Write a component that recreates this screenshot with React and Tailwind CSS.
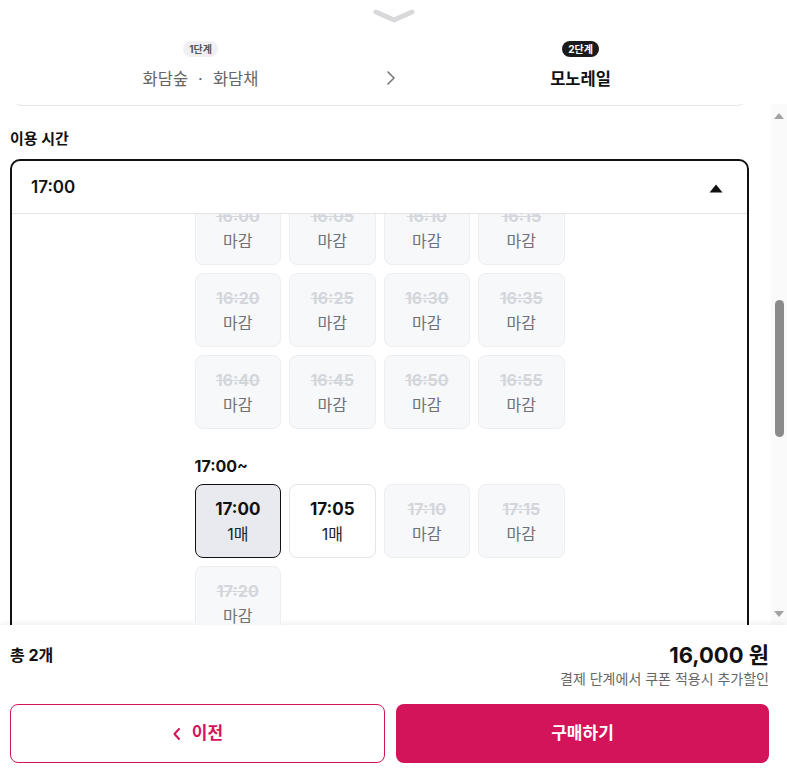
import React, { useLayoutEffect, useRef } from 'react'

const FONT = { fontFamily: 'Inter, "Noto Sans CJK KR", "Noto Sans", sans-serif' }

const rows16 = [
    ['16:00', '16:05', '16:10', '16:15'],
    ['16:20', '16:25', '16:30', '16:35'],
    ['16:40', '16:45', '16:50', '16:55'],
]

const slots17 = [
    { time: '17:00', label: '1매', state: 'selected' },
    { time: '17:05', label: '1매', state: 'open' },
    { time: '17:10', label: '마감', state: 'closed' },
    { time: '17:15', label: '마감', state: 'closed' },
    { time: '17:20', label: '마감', state: 'closed' },
]

const Slot = ({ time, label, state }) => {
    if (state === 'closed') {
        return (
            <div className="flex h-[74px] flex-col items-center justify-center rounded-lg border border-[#eceef2] bg-[#f7f8fa]">
                <span className="text-[16px] font-bold leading-5 text-[#d3d6db] line-through">{time}</span>
                <span className="mt-[5px] text-[16px] leading-5 text-[#6f7177]">{label}</span>
            </div>
        )
    }
    const selected = state === 'selected'
    return (
        <div className={`flex h-[74px] flex-col items-center justify-center rounded-lg border ${selected ? 'border-[#111] bg-[#e9eaef]' : 'border-[#e4e5e8] bg-white'}`}>
            <span className="text-[17px] font-bold leading-5 text-[#111]">{time}</span>
            <span className="mt-[5px] text-[16px] leading-5 text-[#222]">{label}</span>
        </div>
    )
}

// classic scrollbar look beside the scroll area
const FakeScrollbar = () => (
    <div className="flex w-[16px] shrink-0 flex-col items-center bg-[#fafafa]">
        <svg className="mt-[9px]" width="10" height="6" viewBox="0 0 10 6">
            <path d="M5 0 L10 6 L0 6 Z" fill="#a3a3a3" />
        </svg>
        <div className="mt-[181px] h-[137px] w-[9px] rounded-full bg-[#8b8b8b]" />
        <div className="flex-1" />
        <svg className="mb-[8px]" width="10" height="6" viewBox="0 0 10 6">
            <path d="M0 0 L10 0 L5 6 Z" fill="#a3a3a3" />
        </svg>
    </div>
)

export default function App() {
    const outerRef = useRef(null)
    const cardRef = useRef(null)
    const listRef = useRef(null)
    const firstRowRef = useRef(null)

    useLayoutEffect(() => {
        const card = cardRef.current
        outerRef.current.scrollTop = card.offsetTop + card.offsetHeight - 2
        listRef.current.scrollTop = firstRowRef.current.offsetTop + 23
    }, [])

    return (
        <div className="flex h-[776px] w-[787px] flex-col overflow-hidden bg-white text-[#111]" style={FONT}>

            {/* Header / steps */}
            <div className="h-[104px] shrink-0 bg-white">
                <div className="flex justify-center pt-[8px]">
                    <svg width="44" height="16" viewBox="0 0 44 16" fill="none">
                        <path d="M4 4 L22 12 L40 4" stroke="#d9d9dc" strokeWidth="5" strokeLinecap="round" strokeLinejoin="round" />
                    </svg>
                </div>
                <div className="mt-[17px] flex items-center justify-center gap-[64px] pr-[6px]">
                    <div className="flex w-[240px] flex-col items-center">
                        <span className="rounded-full bg-[#f0f0f3] px-[6px] text-[10px] font-bold leading-[16px] text-[#555]">1단계</span>
                        <span className="mt-[10px] text-[16.5px] leading-[24px] text-[#666]">
                            화담숲<span className="mx-[10px]">·</span>화담채
                        </span>
                    </div>
                    <svg className="mt-[24px]" width="12" height="16" viewBox="0 0 12 16" fill="none">
                        <path d="M3 2 L9 8 L3 14" stroke="#777" strokeWidth="1.6" strokeLinecap="round" strokeLinejoin="round" />
                    </svg>
                    <div className="flex w-[240px] flex-col items-center">
                        <span className="rounded-full bg-[#1a1a1a] px-[6px] text-[10px] font-bold leading-[16px] text-white">2단계</span>
                        <span className="mt-[10px] text-[16.5px] font-bold leading-[24px] text-[#111]">모노레일</span>
                    </div>
                </div>
            </div>

            {/* Scrollable content */}
            <div className="flex min-h-0 flex-1">
                <div ref={outerRef} className="relative min-w-0 flex-1 overflow-y-scroll [scrollbar-width:none]">
                    <div className="min-h-[1867px] pl-[10px] pr-[22px] pt-[20px]">
                        <p className="text-[15px] font-bold leading-5">이용 날짜</p>
                        <div ref={cardRef} className="mt-[12px] h-[630px] rounded-xl border border-[#e5e5e7]" />

                        <p className="mt-[23px] text-[15px] font-bold leading-5">이용 시간</p>

                        <div className="mt-[10px] rounded-[10px] border-2 border-[#111]">
                            <div className="flex h-[53px] items-center justify-between border-b border-[#e4e4e6] pl-[19px] pr-[24px] pt-[2px]">
                                <span className="text-[17px] font-semibold">17:00</span>
                                <svg width="14" height="9" viewBox="0 0 14 9">
                                    <path d="M7 0.5 L13.5 8.5 L0.5 8.5 Z" fill="#111" />
                                </svg>
                            </div>
                            <div ref={listRef} className="relative h-[460px] overflow-y-auto [scrollbar-width:none]">
                                <div className="mx-auto w-[370px] pb-[160px] pt-[16px]">
                                    <p className="text-[16px] font-bold leading-5">16:00~</p>
                                    <div ref={firstRowRef} className="mt-[8px] grid grid-cols-4 gap-[8px]">
                                        {rows16.flat().map((t) => (
                                            <Slot key={t} time={t} label="마감" state="closed" />
                                        ))}
                                    </div>
                                    <p className="mt-[27px] text-[16px] font-bold leading-5">17:00~</p>
                                    <div className="mt-[8px] grid grid-cols-4 gap-[8px]">
                                        {slots17.map((s) => (
                                            <Slot key={s.time} {...s} />
                                        ))}
                                    </div>
                                </div>
                            </div>
                        </div>
                    </div>
                </div>
                <FakeScrollbar />
            </div>

            {/* Footer */}
            <div className="h-[151px] shrink-0 bg-white pl-[10px] pr-[18px] pt-[16px] shadow-[0_-2px_6px_rgba(0,0,0,0.06)]">
                <div className="flex items-start justify-between">
                    <span className="mt-[2px] text-[16px] font-bold leading-6">총 2개</span>
                    <div className="flex flex-col items-end">
                        <span className="text-[22px] font-bold leading-7">16,000 원</span>
                        <span className="text-[14px] leading-5 text-[#666]">결제 단계에서 쿠폰 적용시 추가할인</span>
                    </div>
                </div>
                <div className="mt-[15px] flex gap-[11px]">
                    <button className="flex h-[59px] flex-1 items-center justify-center gap-[10px] rounded-lg border border-[#d4145a] bg-white text-[17px] font-bold text-[#d4145a]">
                        <svg width="10" height="14" viewBox="0 0 10 14" fill="none">
                            <path d="M7 2 L2.5 7 L7 12" stroke="#d4145a" strokeWidth="2" strokeLinecap="round" strokeLinejoin="round" />
                        </svg>
                        이전
                    </button>
                    <button className="flex h-[59px] flex-1 items-center justify-center rounded-lg bg-[#d4145a] text-[17px] font-bold text-white">
                        구매하기
                    </button>
                </div>
            </div>
        </div>
    )
}
